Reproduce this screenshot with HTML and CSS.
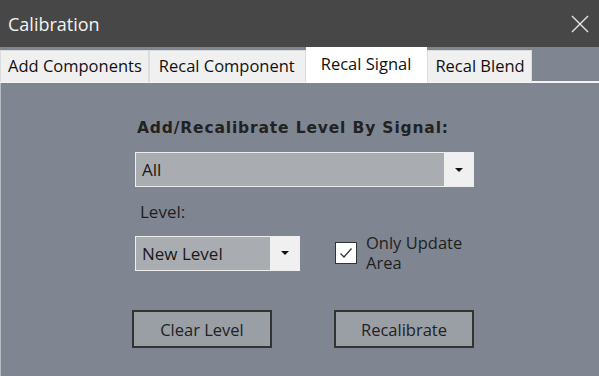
FILE: index.html
```html
<!DOCTYPE html>
<html lang="en">
<head>
    <meta charset="UTF-8">
    <meta name="viewport" content="width=device-width, initial-scale=1.0">
    <title>Calibration</title>
    <link rel="stylesheet" href="styles.css">
</head>
<body>
    <div class="window">
        <div class="titlebar">
            <span class="title">Calibration</span>
            <svg class="close" width="18" height="18" viewBox="0 0 18 18">
                <path d="M1 1 L17 17 M17 1 L1 17" stroke="#e6e6e6" stroke-width="1.4" fill="none"/>
            </svg>
        </div>

        <div class="tabs">
            <div class="tab">Add Components</div>
            <div class="tab">Recal Component</div>
            <div class="tab active">Recal Signal</div>
            <div class="tab">Recal Blend</div>
        </div>

        <div class="panel">
            <div class="heading">Add/Recalibrate Level By Signal:</div>
            <div class="combo wide">
                <span class="value">All</span>
                <span class="arrow"></span>
            </div>

            <div class="label">Level:</div>
            <div class="row">
                <div class="combo small">
                    <span class="value">New Level</span>
                    <span class="arrow"></span>
                </div>
                <label class="check">
                    <span class="box">
                        <svg width="16" height="16" viewBox="0 0 16 16">
                            <path d="M2.5 8.5 L6 12 L13.5 3.5" stroke="#333" stroke-width="1.3" fill="none"/>
                        </svg>
                    </span>
                    <span class="check-text">
                        <span class="line">Only Update</span>
                        <span class="line">Area</span>
                    </span>
                </label>
            </div>

            <div class="actions">
                <button class="button">Clear Level</button>
                <button class="button">Recalibrate</button>
            </div>
        </div>
    </div>
</body>
</html>
```

FILE: styles.css
```css
* {
    box-sizing: border-box;
}

body {
    margin: 0;
    background-color: #7f8691;
    font-family: "Open Sans", "Noto Sans", sans-serif;
    color: #1f1f1f;
}

.window {
    width: 599px;
    height: 376px;
    display: flex;
    flex-direction: column;
}

.titlebar {
    height: 47px;
    background-color: #474747;
    display: flex;
    align-items: center;
    justify-content: space-between;
    padding: 0 10px 0 8px;
}

.title {
    color: #f2f2f2;
    font-size: 18px;
}

.close {
    display: block;
}

.tabs {
    height: 36px;
    display: flex;
    align-items: flex-start;
    padding-top: 2px;
    border-bottom: 2px solid #f4f4f4;
}

.tab {
    height: 32px;
    margin-top: 1px;
    padding: 0 6px 0 7px;
    background-color: #f0f0f0;
    border: 1px solid #dcdcdc;
    border-bottom: none;
    font-size: 16.5px;
    line-height: 30px;
    color: #111;
}

.tab:nth-child(2) {
    padding: 0 10px 0 9px;
}

.tab.active {
    height: 36px;
    margin-top: -2px;
    background-color: #ffffff;
    border-color: #ffffff;
    padding: 0 15px 0 14px;
    line-height: 32px;
    position: relative;
    z-index: 1;
}

.panel {
    flex: 1;
    border-left: 1px solid #b8bcc2;
    padding: 35px 0 0 134px;
}

.heading {
    font-family: "DejaVu Sans", sans-serif;
    font-weight: bold;
    font-size: 15.5px;
    letter-spacing: 0.85px;
    line-height: 20px;
    color: #222;
    padding-left: 2px;
}

.combo {
    display: flex;
    height: 35px;
    border: 1px solid #eeeeee;
    background-color: #a9acb1;
    font-size: 17px;
}

.combo.wide {
    width: 339px;
    margin-top: 14px;
}

.combo.small {
    width: 165px;
}

.value {
    flex: 1;
    padding-left: 6px;
    line-height: 33px;
    color: #1a1a1a;
}

.arrow {
    width: 29px;
    background-color: #f0f0f0;
    display: flex;
    align-items: center;
    justify-content: center;
}

.arrow::after {
    content: "";
    border-left: 4px solid transparent;
    border-right: 4px solid transparent;
    border-top: 4px solid #111;
}

.label {
    margin-top: 14px;
    padding-left: 5px;
    font-size: 17px;
    line-height: 22px;
}

.row {
    display: flex;
    align-items: center;
    margin-top: 10px;
}

.check {
    display: flex;
    align-items: center;
    margin-left: 35px;
    gap: 9px;
}

.box {
    width: 22px;
    height: 22px;
    background-color: #ffffff;
    border: 1px solid #333;
    display: flex;
    align-items: center;
    justify-content: center;
}

.check-text {
    display: flex;
    flex-direction: column;
    font-size: 16.5px;
}

.line {
    display: block;
    height: 20px;
    line-height: 20px;
}

.actions {
    display: flex;
    gap: 62px;
    margin-top: 37px;
    margin-left: -3px;
}

.button {
    width: 140px;
    height: 38px;
    background-color: #9a9ea5;
    border: 2px solid #333;
    font-family: "Open Sans", "Noto Sans", sans-serif;
    font-size: 16.5px;
    color: #222;
    padding: 0;
}
```
